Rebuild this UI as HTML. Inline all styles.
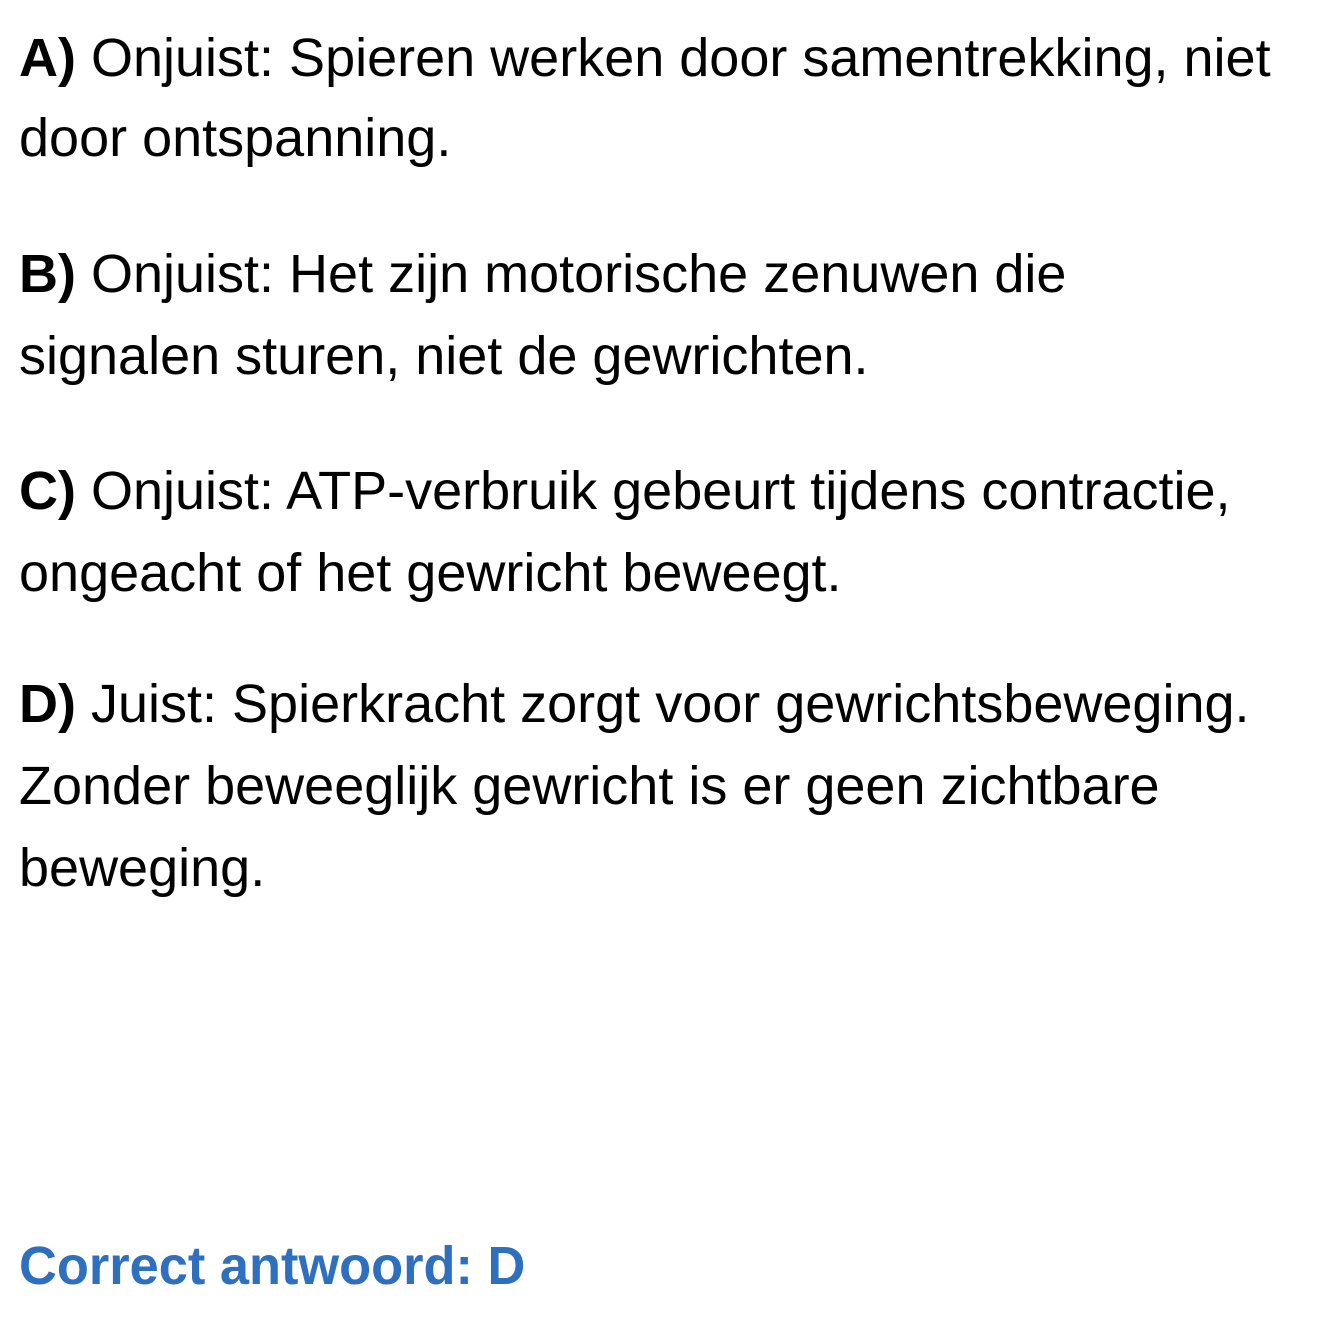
<!DOCTYPE html>
<html><head><meta charset="utf-8"><style>
html,body{margin:0;padding:0;background:#fff;}
body{width:1330px;height:1322px;position:relative;overflow:hidden;font-family:"Liberation Sans",sans-serif;color:#000;}
.l{position:absolute;left:19px;font-size:54px;line-height:54px;white-space:nowrap;}
b{font-weight:bold}
.c{color:#2e6fbf;font-weight:bold;transform-origin:0 0;transform:scaleX(0.97)}
</style></head><body>
<div class="l" style="top:31px"><b>A)</b> Onjuist: Spieren werken door samentrekking, niet</div>
<div class="l" style="top:111px">door ontspanning.</div>
<div class="l" style="top:247px"><b>B)</b> Onjuist: Het zijn motorische zenuwen die</div>
<div class="l" style="top:329px">signalen sturen, niet de gewrichten.</div>
<div class="l" style="top:464px"><b>C)</b> Onjuist: ATP-verbruik gebeurt tijdens contractie,</div>
<div class="l" style="top:546px">ongeacht of het gewricht beweegt.</div>
<div class="l" style="top:677px"><b>D)</b> Juist: Spierkracht zorgt voor gewrichtsbeweging.</div>
<div class="l" style="top:759px">Zonder beweeglijk gewricht is er geen zichtbare</div>
<div class="l" style="top:841px">beweging.</div>
<div class="l c" style="top:1239px">Correct antwoord: D</div>
</body></html>
